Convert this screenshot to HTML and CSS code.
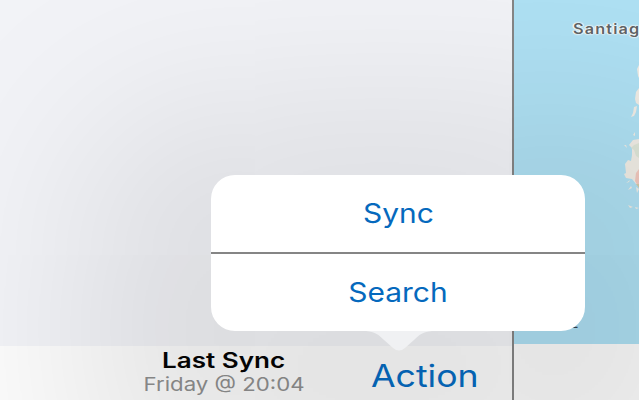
FILE: index.html
```html
<!DOCTYPE html>
<html lang="en">
<head>
<meta charset="utf-8">
<title>Last Sync</title>
<link rel="stylesheet" href="styles.css">
</head>
<body>
<main class="app">
  <section class="sidebar">
    <div class="content"></div>
    <footer class="toolbar">
      <div class="status">
        <strong class="status-title"><span>Last Sync</span></strong>
        <span class="status-time"><span>Friday @ 20:04</span></span>
      </div>
      <a class="action"><span>Action</span></a>
    </footer>
  </section>
  <section class="detail">
    <div class="map">
      <svg class="land" width="40" height="345" viewBox="0 0 40 345">
        <g fill="#f1ede6">
          <path d="M40 65l-2 4 1 7 1 2zM40 88l-3 4-1 7 1 4 3 2zM38 106l-3 1-1 6-2 4 3-1 2-4zM40 139l-6 1-4 5 3 3 0 7-1 6-3-1-3 4 1 9-2 1 2 4 6 1 4 5 4 2z"/>
          <path d="M36 132l-2 3 2 1zM25 145l3 3-1-3zM31 180l-4 3 3-1zM32 186l-3 4 4-2zM29 205l5 2-3 1zM36 207l4 1-3 1zM40 189l-3-2 1 6z"/>
        </g>
        <path fill="#dfe6d9" d="M40 143l-5 2-3 3 3 2 2 6 3 2z"/>
        <path fill="#f3c9bf" d="M40 169l-3 4-1 8 4 7z"/>
        <path fill="#d2cba8" d="M40 184l-3 0 3 4z"/>
      </svg>
      <span class="place">Santiag</span>
      <span class="legal">E</span>
    </div>
    <footer class="toolbar detail-bar"></footer>
  </section>
</main>
<nav class="popover">
  <a class="option sync"><span>Sync</span></a>
  <a class="option search"><span>Search</span></a>
  <svg class="arrow" width="66" height="22" viewBox="0 0 66 22"><path fill="#f0f1f3" d="M0 0H66C57 1 54 3 48 9L39 17Q33 22 27 17L18 9C12 3 9 1 0 0Z"/></svg>
</nav>
</body>
</html>
```

FILE: styles.css
```css
* { box-sizing: border-box; }
body {
  margin: 0;
  width: 639px;
  height: 400px;
  overflow: hidden;
  position: relative;
  font-family: Inter, "Liberation Sans", sans-serif;
}
.app { display: flex; height: 400px; }
.sidebar {
  width: 514px;
  display: flex;
  flex-direction: column;
  border-right: 2px solid #868686;
}
.content { flex: 1; background: #f2f3f7; }
.toolbar { height: 54px; background: #fcfcfc; display: flex; }
.status {
  width: 160px;
  margin-left: 144px;
  display: flex;
  flex-direction: column;
  align-items: center;
  white-space: nowrap;
}
.status-title, .status-time, .action { display: flex; justify-content: center; }
.status-title { font-size: 21px; line-height: 24px; font-weight: 600; margin-top: 3px; color: #050505; }
.status-title span { transform: scaleX(1.24); }
.status-time { font-size: 18.5px; line-height: 23px; color: #909090; }
.status-time span { transform: scaleX(1.2); }
.action { width: 106px; margin-left: 68px; font-size: 31px; line-height: 60px; color: #066cc3; }
.action span { transform: scaleX(1.15); }
.detail { flex: 1; display: flex; flex-direction: column; min-width: 0; }
.map { height: 344px; background: #afe1f4; position: relative; overflow: hidden; }
.detail-bar { height: 56px; }
.land { position: absolute; right: 0; top: 0; }
.place {
  position: absolute;
  left: 59px;
  top: 20px;
  font-size: 14px;
  line-height: 18px;
  font-weight: 600;
  letter-spacing: 1px;
  color: #606568;
  text-shadow: 0 0 2px #fff, 0 0 2px #fff, 1px 0 1px #fff, -1px 0 1px #fff;
  transform: scaleX(1.16);
  transform-origin: left;
}
.legal { position: absolute; left: 57px; top: 318px; font-size: 11px; line-height: 13px; font-weight: 600; color: #35434b; transform: scaleX(1.2); }
.popover {
  position: absolute;
  left: 211px;
  top: 175px;
  width: 374px;
  height: 156px;
  border-radius: 24px;
  background: #fff;
  box-shadow: 10px 75px 200px 135px rgba(0, 0, 0, .1);
}
.option { height: 77px; display: flex; align-items: center; justify-content: center; font-size: 26.5px; color: #0569bd; padding-bottom: 2px; }
.sync { height: 79px; border-bottom: 2px solid #858585; }
.option span { transform: scaleX(1.13); }
.arrow { position: absolute; left: 155px; top: 156px; }
```
